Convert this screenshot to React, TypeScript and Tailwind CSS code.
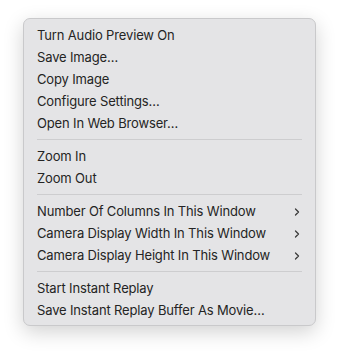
import { ChevronRight } from "lucide-react";

type Item = { label: string; sub?: boolean } | "sep";

const items: Item[] = [
  { label: "Turn Audio Preview On" },
  { label: "Save Image…" },
  { label: "Copy Image" },
  { label: "Configure Settings…" },
  { label: "Open In Web Browser…" },
  "sep",
  { label: "Zoom In" },
  { label: "Zoom Out" },
  "sep",
  { label: "Number Of Columns In This Window", sub: true },
  { label: "Camera Display Width In This Window", sub: true },
  { label: "Camera Display Height In This Window", sub: true },
  "sep",
  { label: "Start Instant Replay" },
  { label: "Save Instant Replay Buffer As Movie…" },
];

export default function App() {
  return (
    <div className="w-[339px] h-[353px] bg-white pt-[18px] pl-[23px]" style={{ fontFamily: "Inter, 'Noto Sans', sans-serif" }}>
      <div className="w-[293px] rounded-[7px] border border-[#c9c9cb] bg-[#e4e4e6] pt-[5px] pb-[4px] shadow-[0_6px_20px_rgba(0,0,0,0.18)]">
        {items.map((it, i) =>
          it === "sep" ? (
            <div key={i} className="h-[11px] flex items-center px-[13px]">
              <div className="h-px w-full bg-[#cdcdcf]" />
            </div>
          ) : (
            <div key={i} className="h-[22px] flex items-center justify-between pl-[13px] pr-[12px] pt-[2px] text-[13px] tracking-[-0.15px] text-[#242424]">
              <span>{it.label}</span>
              {it.sub && <ChevronRight className="w-[12px] h-[12px] text-[#3a3a3a] mb-[1px]" strokeWidth={2.5} />}
            </div>
          )
        )}
      </div>
    </div>
  );
}
